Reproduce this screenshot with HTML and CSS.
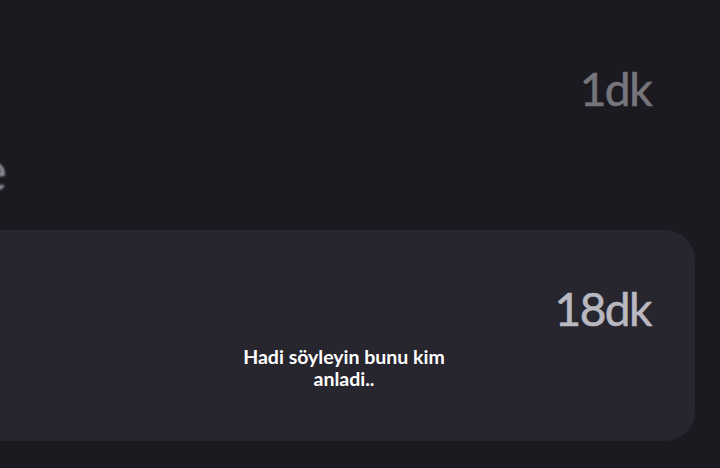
FILE: index.html
```html
<!DOCTYPE html>
<html lang="tr">
<head>
<meta charset="utf-8">
<link rel="stylesheet" href="styles.css">
</head>
<body>
<div class="screen">
  <div class="row row-top">
    <span class="time time-dim">1dk</span>
  </div>
  <div class="row row-name">
    <span class="name">Kaybolan mesaj ve</span>
  </div>
  <div class="card">
    <span class="time time-bright">18dk</span>
  </div>
  <div class="caption">Hadi söyleyin bunu kim<br>anladi..</div>
</div>
</body>
</html>
```
FILE: styles.css
```css
html, body {
  margin: 0;
  padding: 0;
}
body {
  background: #1c1a21;
  font-family: Lato, "Open Sans", "Liberation Sans", sans-serif;
  width: 720px;
  height: 468px;
  overflow: hidden;
}
.screen {
  position: relative;
  width: 720px;
  height: 468px;
  overflow: hidden;
}
.row {
  display: flex;
}
.row-top {
  height: 140px;
  justify-content: flex-end;
  align-items: flex-start;
  padding: 66px 69px 0 0;
  box-sizing: border-box;
}
.time {
  font-size: 46px;
  line-height: 1;
  letter-spacing: -1.5px;
  -webkit-text-stroke: 0.6px currentColor;
}
.time-dim {
  color: #76757c;
}
.time-bright {
  color: #b9b8c0;
}
.row-name {
  height: 90px;
  justify-content: flex-end;
  width: 7px;
  overflow: hidden;
}
.name {
  font-size: 56px;
  line-height: 1;
  color: #8e8d95;
  white-space: nowrap;
  padding-top: 2px;
  filter: blur(1px);
}
.card {
  margin-left: -40px;
  width: 735px;
  height: 211px;
  border-radius: 30px;
  background: #27252e;
  display: flex;
  justify-content: flex-end;
  align-items: flex-start;
  padding: 56px 44px 0 0;
  box-sizing: border-box;
}
.caption {
  position: absolute;
  left: 209px;
  width: 270px;
  top: 346px;
  text-align: center;
  color: #ffffff;
  font-family: Lato, "Open Sans", sans-serif;
  font-weight: 700;
  font-size: 19.5px;
  line-height: 22px;
}
```
